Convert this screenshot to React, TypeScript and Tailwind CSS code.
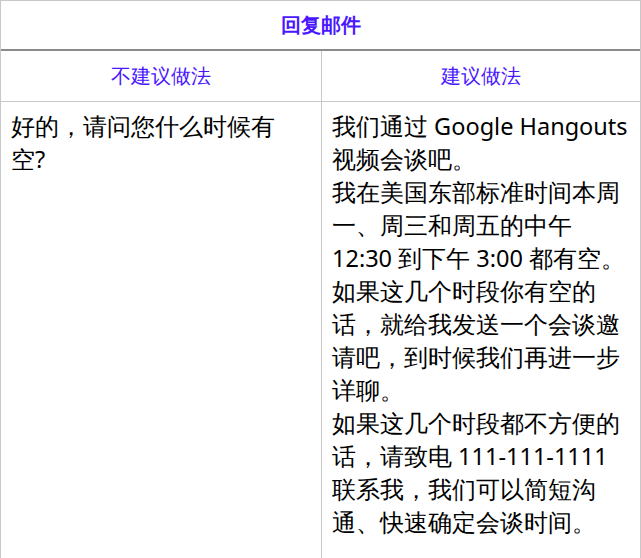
const lines = [
  '我们通过 Google Hangouts',
  '视频会谈吧。',
  '我在美国东部标准时间本周',
  '一、周三和周五的中午',
  '12:30 到下午 3:00 都有空。',
  '如果这几个时段你有空的',
  '话，就给我发送一个会谈邀',
  '请吧，到时候我们再进一步',
  '详聊。',
  '如果这几个时段都不方便的',
  '话，请致电 111-111-1111',
  '联系我，我们可以简短沟',
  '通、快速确定会谈时间。',
];

export default function App() {
  return (
    <div className="w-[641px] h-[558px] overflow-hidden bg-white font-['Liberation_Sans','Noto_Sans_CJK_SC',sans-serif]">
      <div className="border-x border-t border-[#c8c8c8]">
        <div className="h-[50px] flex items-center justify-center border-b-2 border-[#8a8a8a] text-[20px] font-bold text-[#4a17ff]">
          回复邮件
        </div>
        <div className="grid grid-cols-[321px_1fr] border-b border-[#c8c8c8]">
          <div className="h-[50px] flex items-center justify-center border-r border-[#c8c8c8] text-[20px] text-[#4a17ff]">
            不建议做法
          </div>
          <div className="h-[50px] flex items-center justify-center text-[20px] text-[#4a17ff]">
            建议做法
          </div>
        </div>
        <div className="grid grid-cols-[321px_1fr] h-[500px]">
          <div className="border-r border-[#c8c8c8] pl-[10px] pt-[8px] text-[23.5px] leading-[33px] text-black whitespace-nowrap">
            好的，请问您什么时候有<br />空?
          </div>
          <div className="pl-[10px] pt-[8px] text-[23.5px] leading-[33px] text-black whitespace-nowrap">
            {lines.map((l, i) => (
              <div key={i}>{l}</div>
            ))}
          </div>
        </div>
      </div>
    </div>
  );
}
